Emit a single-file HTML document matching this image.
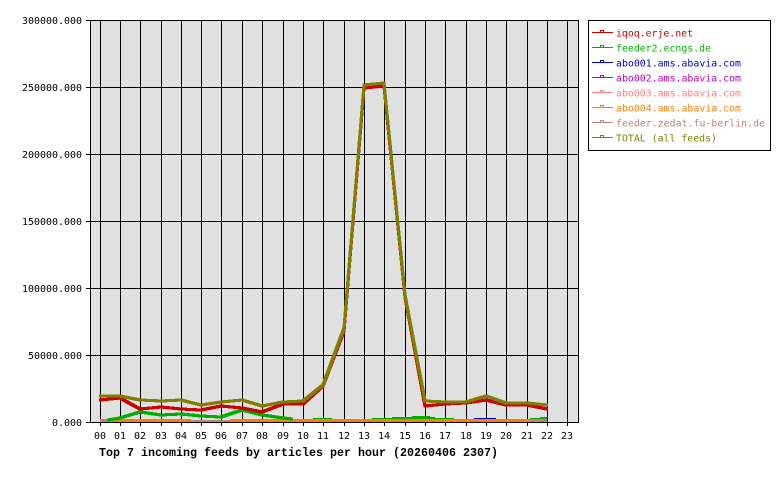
<!DOCTYPE html>
<html><head><meta charset="utf-8"><style>
html,body{margin:0;padding:0;background:#fff;width:780px;height:480px;overflow:hidden}
svg{display:block}
text{font-family:"DejaVu Sans Mono","Liberation Mono",monospace;font-size:10px}
.g{stroke:#000;stroke-width:1;fill:none;shape-rendering:crispEdges}
.b polyline{fill:none;stroke-width:1;shape-rendering:crispEdges}
.l{stroke-width:1;shape-rendering:crispEdges}
.m{fill:none;stroke-width:1;shape-rendering:crispEdges}
rect{shape-rendering:crispEdges}
</style></head><body>
<svg width="780" height="480" viewBox="0 0 780 480" xmlns="http://www.w3.org/2000/svg">
<defs>
<g id="gr" class="b"><polyline stroke="#00b000" points="108,420 120,418 140,412 161,415 181,414 201,416 221,417 242,410 262,415 283,418 292,419"/></g>
<g id="re" class="b"><polyline stroke="#d00000" points="100,400 120,398 140,409 161,407 181,409 201,410 221,406 242,408 262,412 283,404 303,404 323,386 344,331 364,88 384,86 405,297 425,406 445,404 466,403 486,400 506,405 527,405 547,409"/></g>
<g id="ol" class="b"><polyline stroke="#808000" points="100,396 120,396 140,400 161,401 181,400 201,405 221,402 242,400 262,406 283,402 303,401 323,385 344,328 364,85 384,83 405,295 425,401 445,402 466,402 486,396 506,403 527,403 547,405"/></g>
</defs>
<rect x="90" y="20" width="488" height="402" fill="#e0e0e0"/>
<path class="g" d="M86 20.5H578M86 87.5H578M86 154.5H578M86 221.5H578M86 288.5H578M86 355.5H578M86 422.5H578"/>
<path class="g" d="M90.5 20V422M100.5 20V426M120.5 20V426M140.5 20V426M161.5 20V426M181.5 20V426M201.5 20V426M221.5 20V426M242.5 20V426M262.5 20V426M283.5 20V426M303.5 20V426M323.5 20V426M344.5 20V426M364.5 20V426M384.5 20V426M405.5 20V426M425.5 20V426M445.5 20V426M466.5 20V426M486.5 20V426M506.5 20V426M527.5 20V426M547.5 20V426M567.5 20V426M578.5 20V423"/>
<rect x="100" y="421" width="447" height="1" fill="#c08080"/>
<rect x="100" y="419" width="10" height="3" fill="#c08080"/>
<rect x="191" y="420" width="39" height="2" fill="#c08080"/>
<rect x="530" y="419" width="17" height="3" fill="#c08080"/>
<rect x="474" y="418" width="22" height="1" fill="#0000d0"/>
<g fill="#00b000">
<rect x="313" y="418" width="19" height="1"/>
<rect x="372" y="418" width="20" height="1"/>
<rect x="392" y="417" width="20" height="2"/>
<rect x="412" y="416" width="18" height="3"/>
<rect x="430" y="417" width="5" height="2"/>
<rect x="435" y="418" width="7" height="2"/>
<rect x="442" y="418" width="12" height="1"/>
<rect x="530" y="418" width="10" height="1"/>
<rect x="540" y="417" width="7" height="2"/>
</g>
<rect x="108" y="419" width="83" height="2" fill="#ff8000"/>
<rect x="230" y="419" width="300" height="2" fill="#ff8000"/>
<use href="#gr" x="-1" y="-1"/><use href="#gr" x="0" y="-1"/><use href="#gr" x="1" y="-1"/><use href="#gr" x="-1" y="0"/><use href="#gr" x="0" y="0"/><use href="#gr" x="1" y="0"/><use href="#gr" x="-1" y="1"/><use href="#gr" x="0" y="1"/><use href="#gr" x="1" y="1"/>
<use href="#re" x="-1" y="-1"/><use href="#re" x="0" y="-1"/><use href="#re" x="1" y="-1"/><use href="#re" x="-1" y="0"/><use href="#re" x="0" y="0"/><use href="#re" x="1" y="0"/><use href="#re" x="-1" y="1"/><use href="#re" x="0" y="1"/><use href="#re" x="1" y="1"/>
<use href="#ol" x="-1" y="-1"/><use href="#ol" x="0" y="-1"/><use href="#ol" x="1" y="-1"/><use href="#ol" x="-1" y="0"/><use href="#ol" x="0" y="0"/><use href="#ol" x="1" y="0"/><use href="#ol" x="-1" y="1"/><use href="#ol" x="0" y="1"/><use href="#ol" x="1" y="1"/>
<g fill="#000">
<text x="22" y="24" textLength="60" lengthAdjust="spacingAndGlyphs">300000.000</text>
<text x="22" y="91" textLength="60" lengthAdjust="spacingAndGlyphs">250000.000</text>
<text x="22" y="158" textLength="60" lengthAdjust="spacingAndGlyphs">200000.000</text>
<text x="22" y="225" textLength="60" lengthAdjust="spacingAndGlyphs">150000.000</text>
<text x="22" y="292" textLength="60" lengthAdjust="spacingAndGlyphs">100000.000</text>
<text x="28" y="359" textLength="54" lengthAdjust="spacingAndGlyphs">50000.000</text>
<text x="52" y="426" textLength="30" lengthAdjust="spacingAndGlyphs">0.000</text>
<text x="94" y="439">00</text><text x="114" y="439">01</text><text x="134" y="439">02</text><text x="155" y="439">03</text><text x="175" y="439">04</text><text x="195" y="439">05</text><text x="215" y="439">06</text><text x="236" y="439">07</text><text x="256" y="439">08</text><text x="277" y="439">09</text><text x="297" y="439">10</text><text x="317" y="439">11</text><text x="338" y="439">12</text><text x="358" y="439">13</text><text x="378" y="439">14</text><text x="399" y="439">15</text><text x="419" y="439">16</text><text x="439" y="439">17</text><text x="460" y="439">18</text><text x="480" y="439">19</text><text x="500" y="439">20</text><text x="521" y="439">21</text><text x="541" y="439">22</text><text x="561" y="439">23</text>
<text x="99" y="456" font-weight="bold" style="font-family:'Liberation Mono',monospace;font-size:11.67px" textLength="399" lengthAdjust="spacingAndGlyphs">Top 7 incoming feeds by articles per hour (20260406 2307)</text>
</g>
<rect x="588.5" y="20.5" width="182" height="130" fill="#fff" stroke="#000" class="g"/>
<g>
<path class="l" stroke="#d00000" d="M592 32.5H613"/><rect class="m" stroke="#d00000" x="600.5" y="30.5" width="3" height="2"/><text x="616" y="36.5" fill="#d00000" textLength="77" lengthAdjust="spacingAndGlyphs">iqoq.erje.net</text>
<path class="l" stroke="#00b000" d="M592 47.5H613"/><rect class="m" stroke="#00b000" x="600.5" y="45.5" width="3" height="2"/><text x="616" y="51.5" fill="#00b000" textLength="95" lengthAdjust="spacingAndGlyphs">feeder2.ecngs.de</text>
<path class="l" stroke="#0000d0" d="M592 62.5H613"/><rect class="m" stroke="#0000d0" x="600.5" y="60.5" width="3" height="2"/><text x="616" y="66.5" fill="#0000d0" textLength="125" lengthAdjust="spacingAndGlyphs">abo001.ams.abavia.com</text>
<path class="l" stroke="#c000c0" d="M592 77.5H613"/><rect class="m" stroke="#c000c0" x="600.5" y="75.5" width="3" height="2"/><text x="616" y="81.5" fill="#c000c0" textLength="125" lengthAdjust="spacingAndGlyphs">abo002.ams.abavia.com</text>
<path class="l" stroke="#ff8080" d="M592 92.5H613"/><rect class="m" stroke="#ff8080" x="600.5" y="90.5" width="3" height="2"/><text x="616" y="96.5" fill="#ff8080" textLength="125" lengthAdjust="spacingAndGlyphs">abo003.ams.abavia.com</text>
<path class="l" stroke="#ff8000" d="M592 107.5H613"/><rect class="m" stroke="#ff8000" x="600.5" y="105.5" width="3" height="2"/><text x="616" y="111.5" fill="#ff8000" textLength="125" lengthAdjust="spacingAndGlyphs">abo004.ams.abavia.com</text>
<path class="l" stroke="#c08080" d="M592 122.5H613"/><rect class="m" stroke="#c08080" x="600.5" y="120.5" width="3" height="2"/><text x="616" y="126.5" fill="#c08080" textLength="149" lengthAdjust="spacingAndGlyphs">feeder.zedat.fu-berlin.de</text>
<path class="l" stroke="#808000" d="M592 137.5H613"/><rect class="m" stroke="#808000" x="600.5" y="135.5" width="3" height="2"/><text x="616" y="141.5" fill="#808000" textLength="101" lengthAdjust="spacingAndGlyphs">TOTAL (all feeds)</text>
</g>
</svg>
</body></html>
